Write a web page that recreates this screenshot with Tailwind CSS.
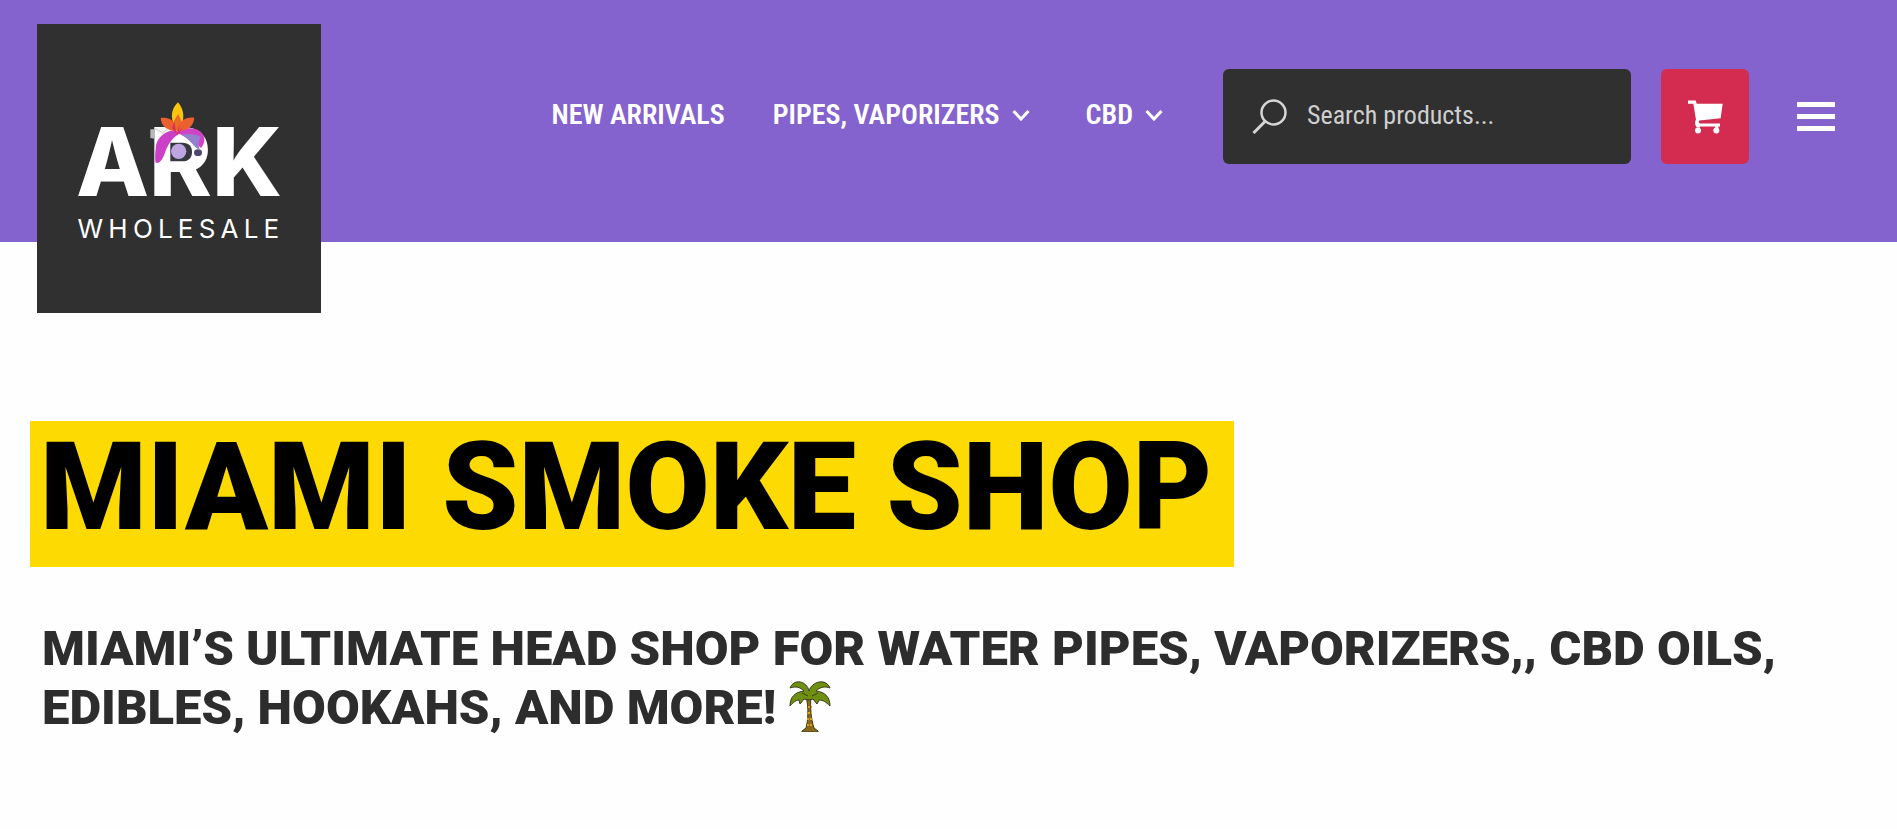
<!DOCTYPE html>
<html lang="en">
<head>
  <meta charset="UTF-8" />
  <meta name="viewport" content="width=device-width, initial-scale=1" />
  <title>Miami Smoke Shop | ARK Wholesale</title>
  <script src="https://cdn.jsdelivr.net/npm/@tailwindcss/browser@4"></script>
</head>
<body class="bg-[#fefefe] font-['Roboto',sans-serif]">

  <!-- Header -->
  <header class="flex h-[242px] items-start justify-between bg-[#8563ce] pl-[37px] pr-[62px]">
    <a href="#" aria-label="ARK Wholesale" class="relative mt-6 flex h-[289px] w-[284px] shrink-0 flex-col items-center bg-[#303030] pt-[90px] text-white">
      <span class="font-['Inter',sans-serif] text-[95px] leading-[96px] font-extrabold">ARK</span>
      <span class="pl-1 font-['Inter',sans-serif] text-[26px] leading-[38px] tracking-[0.2em]">WHOLESALE</span>
      <!-- Flower over the R -->
      <svg class="absolute left-[110px] top-[76px] size-[67px]" viewBox="380 270 201 201" aria-hidden="true">
        <path d="M390 358h12v28l-12-2z" fill="#b9b9b9" />
        <path d="M403 353h55l8 20h-50z" fill="#f4f4f4" />
        <path d="M403 356l24 12 14-10" fill="none" stroke="#bbb" stroke-width="2" />
        <path d="M448 372h50c26 0 40 24 40 50s-12 46-34 46h-56z" fill="#fff" />
        <path d="M450 398h36c20 0 29 11 29 28s-9 28-29 28h-36z" fill="#383840" />
        <circle cx="475" cy="424" r="23" fill="#bda6e2" />
        <path d="M468 370c22-24 82-22 84 18 0 12-4 20-10 26-16-16-38-34-74-44z" fill="#d043c6" />
        <path d="M482 374c20-4 48-2 60 6-8 12-8 24-4 38-16-2-26-30-56-44z" fill="#9380cf" />
        <ellipse cx="533" cy="428" rx="12" ry="10" fill="#514672" />
        <path d="M470 362c-34-4-56 20-62 40-4 20-4 50-2 56 14 4 22-14 28-30 8-22 18-40 38-54z" fill="#cc3fc7" />
        <path d="M473 277c20 22 22 56 2 88-28-30-26-66-2-88z" fill="#fbc50e" />
        <path d="M473 312l10 20-10 34-14-30z" fill="#e96b25" />
        <path d="M421 324c30-4 46 12 50 40-30-2-48-14-50-40zM522 323c-30-2-48 12-53 40 32 0 50-12 53-40z" fill="#ec5f2f" />
        <path d="M462 336l6 38 10-30-3 20 14-12-18 24-16-22z" fill="#d72f63" />
      </svg>
    </a>

    <div class="mt-[69px] flex h-[95px] items-center">
      <nav class="mr-[60px] flex items-center gap-12 pb-1 font-['Roboto_Condensed','Liberation_Sans_Narrow','Roboto',sans-serif] text-[28px] leading-9 font-semibold text-white">
        <a href="#">NEW ARRIVALS</a>
        <a href="#" class="flex items-center gap-3">PIPES, VAPORIZERS
          <svg class="h-3 w-[18px]" viewBox="0 0 18 12" fill="none" stroke="currentColor" stroke-width="3" aria-hidden="true"><path d="M1.500 2 9 10l7.500-8" /></svg>
        </a>
        <a href="#" class="ml-2 flex items-center gap-3">CBD
          <svg class="h-3 w-[18px]" viewBox="0 0 18 12" fill="none" stroke="currentColor" stroke-width="3" aria-hidden="true"><path d="M1.500 2 9 10l7.500-8" /></svg>
        </a>
      </nav>

      <form role="search" class="flex h-full w-[408px] items-center gap-5 rounded-md bg-[#303030] pl-[29px] pr-4">
        <svg class="size-[35px] shrink-0" viewBox="0 0 35 35" fill="none" stroke="#d6d6d6" stroke-width="2.500" aria-hidden="true">
          <circle cx="21.500" cy="13.500" r="12" />
          <path d="M13 22.500 1.500 34" stroke-width="3" />
        </svg>
        <input type="search" aria-label="Search products" placeholder="Search products..." class="w-full bg-transparent pb-1 font-['Roboto_Condensed','Liberation_Sans_Narrow','Roboto',sans-serif] text-[26px] leading-9 text-white outline-none placeholder:text-[#cfcfcf]" />
      </form>

      <button type="button" aria-label="Cart" class="ml-[30px] flex h-full w-[88px] items-center justify-center rounded-md bg-[#d42c50] text-white">
        <svg class="h-[34px] w-[35px]" viewBox="144 152 105 101" fill="currentColor" aria-hidden="true">
          <path d="M144 153h23l3 10h78l-6 43-64 7c-3 3-2 7 2 9h60v9h-5l1 5h-11l1-5h-46v3h-9c-7-6-7-18-3-23l-8-48h-16z" />
          <circle cx="174" cy="243" r="9" />
          <circle cx="229" cy="243" r="9" />
        </svg>
      </button>

      <button type="button" aria-label="Menu" class="ml-12 flex w-[38px] flex-col gap-[7px]">
        <span class="h-[5px] bg-white"></span>
        <span class="h-[5px] bg-white"></span>
        <span class="h-[5px] bg-white"></span>
      </button>
    </div>
  </header>

  <!-- Intro -->
  <main class="px-[30px] pt-[179px] pb-20">
    <h1 class="w-fit bg-[#fddb02] pr-[22px] pb-3 pl-[10px] text-[122px] leading-[134px] font-black text-black">MIAMI SMOKE SHOP</h1>
    <h2 class="mt-[52px] pl-3 text-[49px] leading-[59px] font-black text-[#2d2d2d]">
      MIAMI’S ULTIMATE HEAD SHOP FOR WATER PIPES, VAPORIZERS,, CBD OILS, EDIBLES, HOOKAHS, AND MORE!
      <svg class="inline-block h-[52px] w-[42px] align-[-8px]" viewBox="0 0 42 52" stroke="#3c3a22" stroke-width="1" role="img" aria-label="Palm tree">
        <path d="M17 17c3 10 2 24 0 31l-4 3v1h16v-1l-4-3c-3-9-4-22-3-31z" fill="#8a6a14" />
        <path d="M19 27h4M19 33h4M18 39h5M18 45h6" stroke="#d9a21c" stroke-width="2" stroke-dasharray="2 1" />
        <path d="M20 11C18 1 5-2 1 8c6-2 10-1 14 3C6 12 1 17 1 26c4-4 6-6 9-6l1 4 4-5 5 1 4-1 4 5 2-4c4 0 7 2 11 6 0-9-5-14-14-15 4-4 9-5 14-3C37-2 23 1 20 11z" fill="#6f8f10" />
        <path d="M13 13l6 3M29 13l-6 3" fill="none" />
      </svg>
    </h2>
  </main>

</body>
</html>
